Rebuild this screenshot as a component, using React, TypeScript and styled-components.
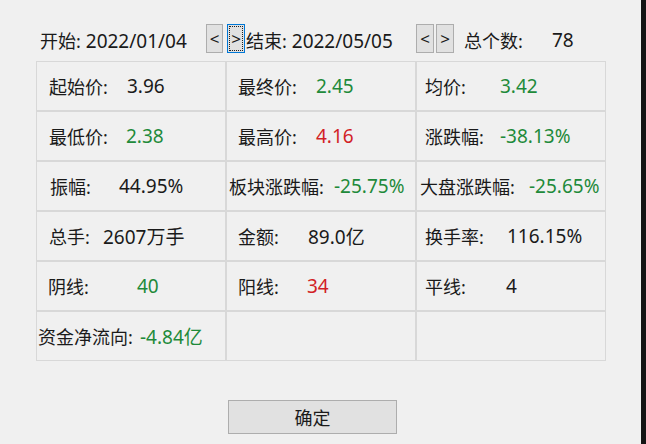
import React from "react";
import styled, { createGlobalStyle } from "styled-components";

const Global = createGlobalStyle`
  html, body { margin: 0; padding: 0; background: #f0f0f0; }
  body { width: 646px; height: 444px; overflow: hidden; }
  * { box-sizing: border-box; }
`;

const FONT = `"Noto Sans", "Noto Sans CJK SC", sans-serif`;

const Page = styled.div`
  display: flex;
  width: 646px;
  height: 444px;
  background: #f0f0f0;
  font-family: ${FONT};
  font-size: 19px;
  color: #1a1a1a;
`;

const Main = styled.div`
  flex: 1;
  display: flex;
  flex-direction: column;
  padding: 24px 0 0 36px;
`;

const Edge = styled.div`
  width: 5px;
  background: #141414;
`;

const Header = styled.div`
  display: flex;
  align-items: center;
  height: 29px;
  padding-left: 4px;
`;

const Field = styled.span<{ $w: number }>`
  width: ${(p) => p.$w}px;
  flex-shrink: 0;
  white-space: nowrap;
  padding-top: 3px;
`;

const Caption = styled.span`
  font-size: 18px;
`;

const Nav = styled.button<{ $w: number; $focus?: boolean; $gap: number }>`
  width: ${(p) => p.$w}px;
  height: 29px;
  margin-right: ${(p) => p.$gap}px;
  padding: 0;
  background: #e1e1e1;
  border: 1px solid ${(p) => (p.$focus ? "#0078d7" : "#adadad")};
  outline: ${(p) => (p.$focus ? "1px dotted #222" : "none")};
  outline-offset: -3px;
  font-family: ${FONT};
  font-size: 17px;
  color: #1a1a1a;
  line-height: 1;
  flex-shrink: 0;
`;

const Table = styled.div`
  margin-top: 8px;
  display: grid;
  grid-template-columns: repeat(3, 188px);
  grid-auto-rows: 48px;
  gap: 2px;
  padding: 1px;
  width: 570px;
  background: #d8d8d8;
`;

const Cell = styled.div<{ $pad: number }>`
  display: flex;
  align-items: center;
  padding-left: ${(p) => p.$pad}px;
  background: #f0f0f0;
  white-space: nowrap;
`;

const Label = styled.span<{ $w: number }>`
  min-width: ${(p) => p.$w}px;
  flex-shrink: 0;
  font-size: 18px;
`;

type Tone = "plain" | "up" | "down";

const Value = styled.span<{ $tone: Tone }>`
  color: ${(p) =>
    p.$tone === "down" ? "#1e8a3a" : p.$tone === "up" ? "#d21f26" : "#1a1a1a"};
`;

const Footer = styled.div`
  display: flex;
  padding-left: 192px;
  margin-top: 39px;
`;

const OkButton = styled.button`
  width: 169px;
  height: 34px;
  background: #e1e1e1;
  border: 1px solid #adadad;
  font-family: ${FONT};
  font-size: 18px;
  color: #1a1a1a;
  padding: 0;
`;

type Item = { label: string; value: string; tone: Tone; pad: number; w: number } | null;

const rows: Item[][] = [
  [
    { label: "起始价:", value: "3.96", tone: "plain", pad: 12, w: 78 },
    { label: "最终价:", value: "2.45", tone: "down", pad: 11, w: 78 },
    { label: "均价:", value: "3.42", tone: "down", pad: 8, w: 75 },
  ],
  [
    { label: "最低价:", value: "2.38", tone: "down", pad: 12, w: 77 },
    { label: "最高价:", value: "4.16", tone: "up", pad: 11, w: 78 },
    { label: "涨跌幅:", value: "-38.13%", tone: "down", pad: 8, w: 75 },
  ],
  [
    { label: "振幅:", value: "44.95%", tone: "plain", pad: 13, w: 69 },
    { label: "板块涨跌幅:", value: "-25.75%", tone: "down", pad: 2, w: 105 },
    { label: "大盘涨跌幅:", value: "-25.65%", tone: "down", pad: 3, w: 109 },
  ],
  [
    { label: "总手:", value: "2607万手", tone: "plain", pad: 12, w: 54 },
    { label: "金额:", value: "89.0亿", tone: "plain", pad: 11, w: 70 },
    { label: "换手率:", value: "116.15%", tone: "plain", pad: 8, w: 82 },
  ],
  [
    { label: "阴线:", value: "40", tone: "down", pad: 11, w: 89 },
    { label: "阳线:", value: "34", tone: "up", pad: 11, w: 69 },
    { label: "平线:", value: "4", tone: "plain", pad: 8, w: 81 },
  ],
  [
    { label: "资金净流向:", value: "-4.84亿", tone: "down", pad: 1, w: 102 },
    null,
    null,
  ],
];

export default function App() {
  return (
    <>
      <Global />
      <Page>
        <Main>
          <Header>
            <Field $w={166}>
              <Caption>开始:</Caption> 2022/01/04
            </Field>
            <Nav $w={17} $gap={4}>&lt;</Nav>
            <Nav $w={18} $gap={1} $focus>&gt;</Nav>
            <Field $w={170}>
              <Caption>结束:</Caption> 2022/05/05
            </Field>
            <Nav $w={18} $gap={2}>&lt;</Nav>
            <Nav $w={18} $gap={10}>&gt;</Nav>
            <Field $w={88}>
              <Caption>总个数:</Caption>
            </Field>
            <Field $w={40}>78</Field>
          </Header>
          <Table>
            {rows.flatMap((row, r) =>
              row.map((c, i) =>
                c ? (
                  <Cell key={`${r}-${i}`} $pad={c.pad}>
                    <Label $w={c.w}>{c.label}</Label>
                    <Value $tone={c.tone}>{c.value}</Value>
                  </Cell>
                ) : (
                  <Cell key={`${r}-${i}`} $pad={0} />
                )
              )
            )}
          </Table>
          <Footer>
            <OkButton>确定</OkButton>
          </Footer>
        </Main>
        <Edge />
      </Page>
    </>
  );
}
